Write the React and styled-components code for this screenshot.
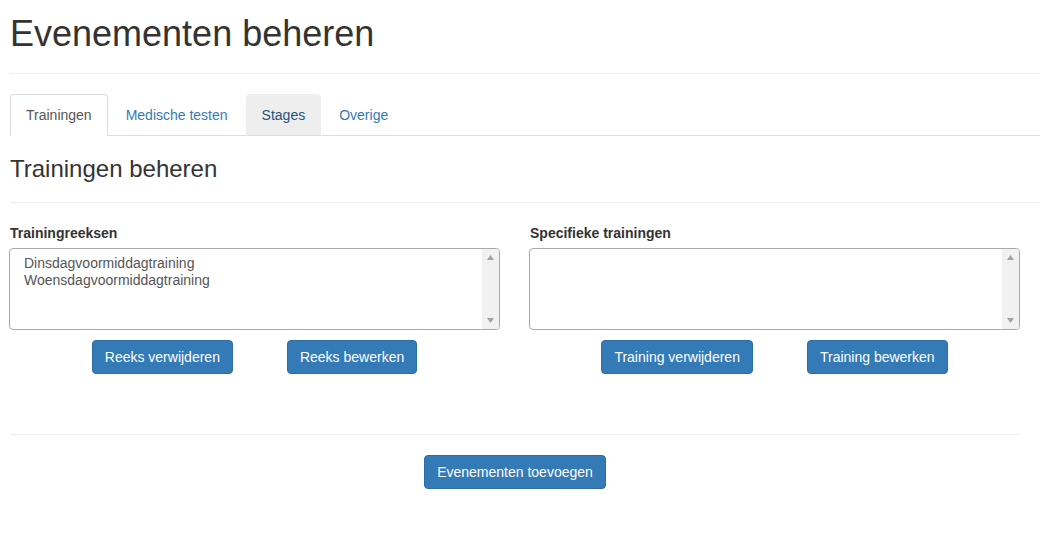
import React, { useState } from "react";
import styled, { createGlobalStyle } from "styled-components";

const GlobalStyle = createGlobalStyle`
  * { box-sizing: border-box; }
  body {
    margin: 0;
    background: #fff;
    font-family: "Liberation Sans", Arial, sans-serif;
    font-size: 14px;
    color: #333;
  }
`;

const Page = styled.div`
  padding-left: 10px;
  overflow: hidden;
`;

const Title = styled.h1`
  margin: 14px 0 0;
  font-size: 36px;
  font-weight: 500;
  line-height: 39.6px;
  color: #333;
`;

const Rule = styled.div`
  border-top: 1px solid #eee;
  margin-top: ${(p) => p.$top || 0}px;
`;

const TabList = styled.ul`
  display: flex;
  list-style: none;
  margin: 20px 0 0;
  padding: 0;
  border-bottom: 1px solid #ddd;
`;

const Tab = styled.li`
  margin: 0 2px -1px 0;
  padding: 10px 15px;
  line-height: 20px;
  border: 1px solid
    ${(p) => (p.$active ? "#ddd" : p.$hover ? "#eee" : "transparent")};
  border-bottom-color: ${(p) =>
    p.$active ? "transparent" : p.$hover ? "#ddd" : "transparent"};
  border-radius: 4px 4px 0 0;
  background: ${(p) => (p.$active ? "#fff" : p.$hover ? "#eee" : "transparent")};
  color: ${(p) => (p.$active ? "#555" : p.$hover ? "#23527c" : "#337ab7")};
  cursor: pointer;
`;

const SectionTitle = styled.h3`
  margin: 20px 0 0;
  font-size: 24px;
  font-weight: 500;
  line-height: 26.4px;
  color: #333;
`;

const Columns = styled.div`
  display: grid;
  grid-template-columns: 491px 491px;
  column-gap: 29px;
  margin: 20px 0 0 -1px;
`;

const Column = styled.div`
  display: flex;
  flex-direction: column;
`;

const Label = styled.label`
  display: block;
  padding-left: 1px;
  margin-bottom: 5px;
  font-weight: 700;
  line-height: 20px;
`;

const ListBox = styled.div`
  display: flex;
  height: 82px;
  border: 1px solid #a9a9a9;
  border-radius: 4px;
  overflow: hidden;
  background: #fff;
`;

const Options = styled.div`
  flex: 1;
  padding: 6px 14px;
`;

const Option = styled.div`
  line-height: 17px;
  color: #555;
  white-space: nowrap;
`;

const Scrollbar = styled.div`
  width: 17px;
  background: #f1f1f1;
  display: flex;
  flex-direction: column;
  justify-content: space-between;
  align-items: center;
  padding: 6px 0;
`;

const ButtonRow = styled.div`
  display: flex;
  justify-content: center;
  gap: 54px;
  margin-top: 10px;
`;

const Button = styled.button`
  font-family: inherit;
  font-size: 14px;
  line-height: 20px;
  padding: 6px 12px;
  color: #fff;
  background: #337ab7;
  border: 1px solid #2e6da4;
  border-radius: 4px;
  cursor: pointer;
`;

const Footer = styled.div`
  width: 1010px;
  display: flex;
  flex-direction: column;
  align-items: center;
  margin-top: 60px;
`;

const FooterRule = styled(Rule)`
  align-self: stretch;
  margin-bottom: 20px;
`;

const Arrow = ({ down }) => (
  <svg width="7" height="5" viewBox="0 0 7 5">
    <path d={down ? "M0 0h7L3.5 5z" : "M3.5 0L7 5H0z"} fill="#a3a3a3" />
  </svg>
);

const SelectList = ({ items }) => (
  <ListBox>
    <Options>
      {items.map((item) => (
        <Option key={item}>{item}</Option>
      ))}
    </Options>
    <Scrollbar>
      <Arrow />
      <Arrow down />
    </Scrollbar>
  </ListBox>
);

const tabs = ["Trainingen", "Medische testen", "Stages", "Overige"];

export default function App() {
  const [active, setActive] = useState("Trainingen");

  return (
    <Page>
      <GlobalStyle />
      <Title>Evenementen beheren</Title>
      <Rule $top={19} />

      <TabList>
        {tabs.map((t) => (
          <Tab
            key={t}
            $active={t === active}
            $hover={t === "Stages" && t !== active}
            onClick={() => setActive(t)}
          >
            {t}
          </Tab>
        ))}
      </TabList>

      <SectionTitle>Trainingen beheren</SectionTitle>
      <Rule $top={20} />

      <Columns>
        <Column>
          <Label>Trainingreeksen</Label>
          <SelectList
            items={["Dinsdagvoormiddagtraining", "Woensdagvoormiddagtraining"]}
          />
          <ButtonRow>
            <Button>Reeks verwijderen</Button>
            <Button>Reeks bewerken</Button>
          </ButtonRow>
        </Column>
        <Column>
          <Label>Specifieke trainingen</Label>
          <SelectList items={[]} />
          <ButtonRow>
            <Button>Training verwijderen</Button>
            <Button>Training bewerken</Button>
          </ButtonRow>
        </Column>
      </Columns>

      <Footer>
        <FooterRule />
        <Button>Evenementen toevoegen</Button>
      </Footer>
    </Page>
  );
}
